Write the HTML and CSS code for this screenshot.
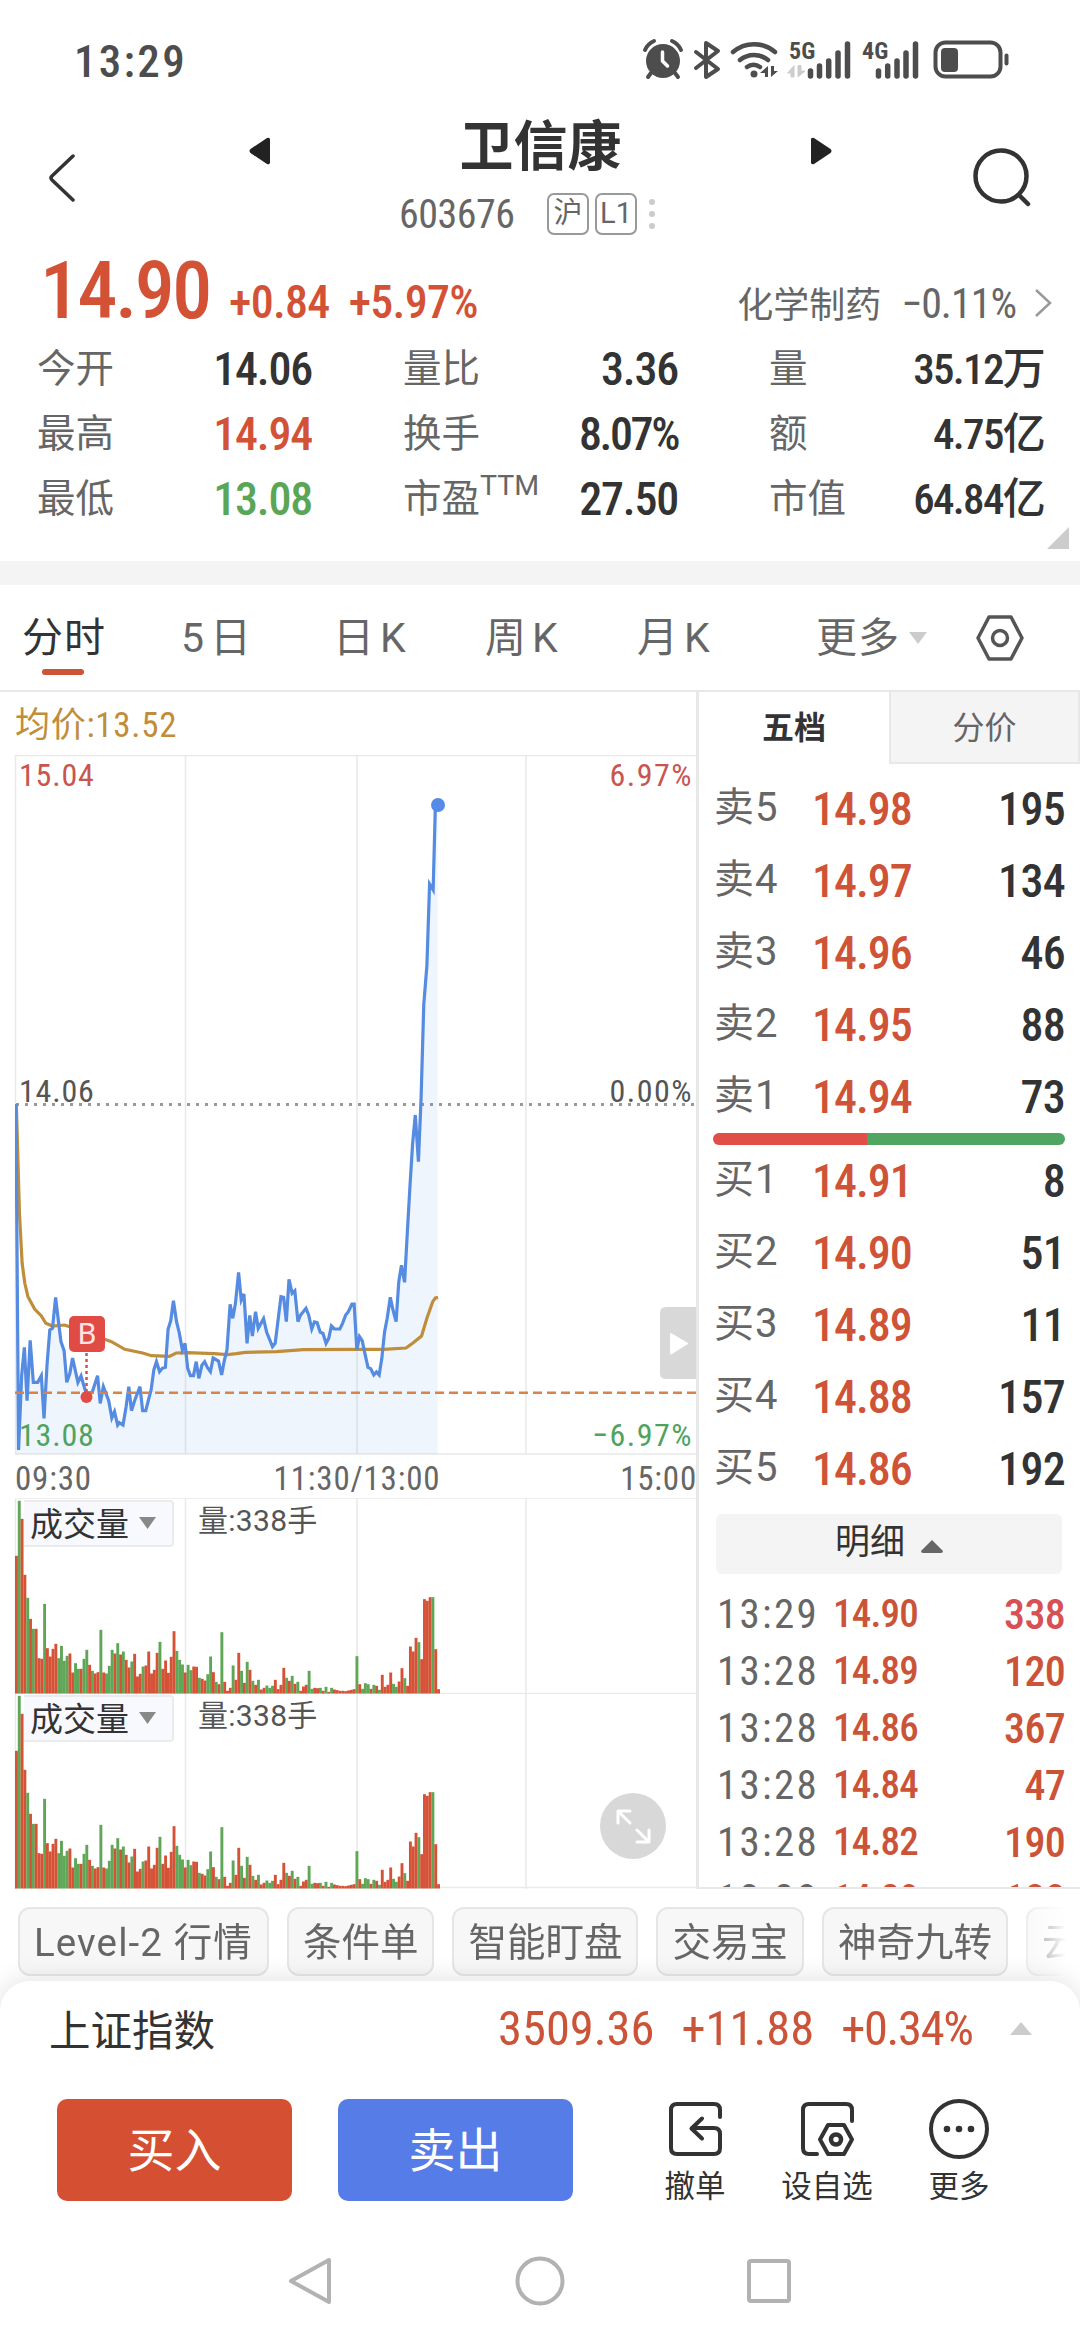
FILE: index.html
```html
<!DOCTYPE html>
<html lang="zh-CN">
<head>
    <meta charset="UTF-8">
    <meta name="viewport" content="width=device-width, initial-scale=1.0">
    <title>卫信康 603676</title>
    <link rel="stylesheet" href="styles.css">
</head>
<body>
    <div class="status-bar">
        <span class="clock">13:29</span>
        <svg class="status-icons" width="380" height="40" viewBox="0 0 380 40" fill="none" stroke-linecap="round">
            <!-- alarm -->
            <circle cx="19" cy="21" r="17" fill="#4d4d4d"/>
            <path d="M1 10a17 17 0 0 1 9-9M28 1a17 17 0 0 1 9 9M7 33l-3 4M31 33l3 4" stroke="#4d4d4d" stroke-width="4"/>
            <path d="M18.500 12v9l5 5" stroke="#fff" stroke-width="3.500"/>
            <!-- bluetooth -->
            <path d="M52 12l22 17-12 8V3l12 8-22 17" stroke="#4d4d4d" stroke-width="4" stroke-linejoin="round"/>
            <!-- wifi -->
            <path d="M89 12a32 32 0 0 1 42 0M96 20a22 22 0 0 1 28 0M103 27a11 11 0 0 1 13 0" stroke="#4d4d4d" stroke-width="4.500"/>
            <circle cx="110" cy="34" r="3.500" fill="#4d4d4d"/>
            <path d="M124 26v11h-3v-4h-5zM127 26v11l7-6h-4v-5z" fill="#4d4d4d"/>
            <!-- signals -->
            <text class="signal-text" x="145" y="19">5G</text>
            <path d="M150 26v11h-3v-4h-3zM154 26v11l7-6h-4v-5z" fill="#ccc" stroke="#ccc"/>
            <path d="M166.500 31v5M175.500 26v10M184.700 21v15M194 13v23M203.500 4v32" stroke="#4d4d4d" stroke-width="5.500"/>
            <text class="signal-text" x="218" y="19">4G</text>
            <path d="M234.500 31v5M243.700 26v10M253 21v15M262 13v23M271.500 4v32" stroke="#4d4d4d" stroke-width="5.500"/>
            <!-- battery -->
            <rect x="291.500" y="2.500" width="65" height="34" rx="10" stroke="#4d4d4d" stroke-width="4"/>
            <rect x="297" y="8" width="17" height="24" rx="4" fill="#4d4d4d"/>
            <path d="M362.500 15.500v8" stroke="#4d4d4d" stroke-width="4"/>
        </svg>
    </div>

    <header class="header">
        <svg class="back" width="28" height="50" viewBox="0 0 28 50" fill="none" stroke="#333" stroke-width="3.500" stroke-linecap="round" stroke-linejoin="round"><path d="M25 3L4 23q-2 2 0 4l21 20"/></svg>
        <svg class="switch prev" width="22" height="28" viewBox="0 0 22 28"><path d="M21 2v24q-1 2-3 1L1.500 16q-2-2 0-4L18 1q2-1 3 1z" fill="#222"/></svg>
        <div class="title">
            <h1>卫信康</h1>
            <div class="code">
                <span class="code-num">603676</span>
                <span class="badge">沪</span>
                <span class="badge">L1</span>
                <span class="dots"><i></i><i></i><i></i></span>
            </div>
        </div>
        <svg class="switch" width="22" height="28" viewBox="0 0 22 28"><path d="M1 2v24q1 2 3 1L20.500 16q2-2 0-4L4 1q-2-1-3 1z" fill="#222"/></svg>
        <svg class="search" width="60" height="62" viewBox="0 0 60 62" fill="none" stroke="#333" stroke-width="4.500" stroke-linecap="round"><circle cx="28" cy="29" r="25.500"/><path d="M46 48l9 9"/></svg>
    </header>

    <section class="quote">
        <div class="price-row">
            <span class="price">14.90</span>
            <span class="change">+0.84</span>
            <span class="change">+5.97%</span>
            <span class="industry">化学制药</span>
            <span class="industry-rate">−0.11%</span>
            <svg class="chevron" width="18" height="30" viewBox="0 0 18 30" fill="none" stroke="#999" stroke-width="2.500"><path d="M2 2l14 13L2 28"/></svg>
        </div>
        <div class="stats">
            <div class="stat"><span>今开</span><b>14.06</b></div>
            <div class="stat"><span>量比</span><b>3.36</b></div>
            <div class="stat"><span>量</span><b>35.12万</b></div>
            <div class="stat"><span>最高</span><b class="up">14.94</b></div>
            <div class="stat"><span>换手</span><b>8.07%</b></div>
            <div class="stat"><span>额</span><b>4.75亿</b></div>
            <div class="stat"><span>最低</span><b class="down">13.08</b></div>
            <div class="stat"><span>市盈<sup>TTM</sup></span><b>27.50</b></div>
            <div class="stat"><span>市值</span><b>64.84亿</b></div>
        </div>
        <svg class="corner" width="22" height="22" viewBox="0 0 22 22"><path d="M22 0v22H0z" fill="#ccc"/></svg>
    </section>

    <nav class="tabs">
        <span class="tab active">分时</span>
        <span class="tab">5日</span>
        <span class="tab">日K</span>
        <span class="tab">周K</span>
        <span class="tab">月K</span>
        <span class="tab more">更多</span>
        <svg width="18" height="12" viewBox="0 0 18 12"><path d="M0 0h18L9 12z" fill="#ccc"/></svg>
        <svg class="gear" width="50" height="48" viewBox="0 0 50 48" fill="none" stroke="#555" stroke-width="3.500" stroke-linejoin="round"><path d="M14 3h22l11 21-11 21H14L3 24z"/><circle cx="25" cy="24" r="7.500"/></svg>
    </nav>

    <main class="main">
        <div class="charts">
            <div class="avg">均价:13.52</div>
            <svg class="minute" width="697" height="744" viewBox="0 755 697 744">
                <path class="grid" d="M15 755.500H696M15.500 755V1454M185.500 755V1454M357 755V1454M526 755V1454M15 1454H696M15 1499H696"/>
                <path d="M16 1104.500H696" stroke="#999" stroke-width="3" stroke-dasharray="3 6"/>
                <svg x="15" y="755" width="681" height="699" viewBox="34 -975 1526 2097" preserveAspectRatio="none">
                    <polygon id="area"/>
                    <polyline class="avg-line" points="37,73 44,400 50,550 56,610 63,650 78,687 93,708 103,730 118,738 145,735 160,742 200,762 235,778 250,785 280,808 320,819 340,827 380,829 395,819 420,818 480,821 510,824 530,821 550,817 620,815 680,809 800,808 860,808 910,804 925,790 945,768 957,715 970,665 976,654 982,652"/>
                    <polyline id="line"/>
                </svg>
                <path d="M15 1392.700H696" stroke="#d9824a" stroke-width="2.500" stroke-dasharray="9 5"/>
                <circle cx="438" cy="805" r="7" fill="#558be8"/>
                <text class="tick red" x="19" y="786">15.04</text>
                <text class="tick red end" x="693" y="786">6.97%</text>
                <text class="tick" x="19" y="1102">14.06</text>
                <text class="tick end" x="693" y="1102">0.00%</text>
                <text class="tick green" x="19" y="1446">13.08</text>
                <text class="tick green end" x="693" y="1446">−6.97%</text>
                <text class="tick time" x="15" y="1490">09:30</text>
                <text class="tick time mid" x="357" y="1490">11:30/13:00</text>
                <text class="tick time last" x="697" y="1490">15:00</text>
                <!-- buy marker -->
                <path d="M86.500 1353v38" stroke="#e04b46" stroke-width="2.500" stroke-dasharray="3 3"/>
                <circle cx="86.500" cy="1397" r="6" fill="#e04b46"/>
                <rect x="69" y="1316" width="36" height="36" rx="5" fill="#e04b46"/>
                <text class="marker" x="87" y="1344">B</text>
                <!-- side panel handle -->
                <path d="M696 1307v72h-30q-6 0-6-6v-60q0-6 6-6z" fill="#d8d8d8"/>
                <path d="M671 1334l16 9.500-16 10z" fill="#fff" stroke="#fff" stroke-width="2" stroke-linejoin="round"/>
            </svg>
            <div class="volume">
                <svg class="bars" width="697" height="195" viewBox="0 0 697 195">
                    <path class="grid" d="M15.500 0V195M185.500 0V195M357 0V195M526 0V195M15 194.500H696"/>
                </svg>
                <span class="vol-name">成交量<svg width="17" height="12" viewBox="0 0 17 12"><path d="M0 0h17L8.500 12z" fill="#888"/></svg></span>
                <span class="vol-value">量:338手</span>
            </div>
            <div class="volume">
                <svg class="bars" width="697" height="195" viewBox="0 0 697 195">
                    <path class="grid" d="M15.500 0V195M185.500 0V195M357 0V195M526 0V195M15 193.500H696"/>
                </svg>
                <span class="vol-name">成交量<svg width="17" height="12" viewBox="0 0 17 12"><path d="M0 0h17L8.500 12z" fill="#888"/></svg></span>
                <span class="vol-value">量:338手</span>
                <svg class="expand" width="66" height="66" viewBox="0 0 66 66" fill="none" stroke="#fff" stroke-width="3" stroke-linecap="round" stroke-linejoin="round"><circle cx="33" cy="33" r="33" fill="#d8d8d8" stroke="none"/><path d="M18 30V18h12M18 18l12 12M37 37l12 12M49 37v12H37"/></svg>
            </div>
        </div>

        <aside class="book">
            <div class="book-tabs"><span class="on">五档</span><span>分价</span></div>
            <div class="levels">
                <div class="level"><span>卖5</span><b>14.98</b><em>195</em></div>
                <div class="level"><span>卖4</span><b>14.97</b><em>134</em></div>
                <div class="level"><span>卖3</span><b>14.96</b><em>46</em></div>
                <div class="level"><span>卖2</span><b>14.95</b><em>88</em></div>
                <div class="level"><span>卖1</span><b>14.94</b><em>73</em></div>
            </div>
            <div class="ratio"></div>
            <div class="levels">
                <div class="level"><span>买1</span><b>14.91</b><em>8</em></div>
                <div class="level"><span>买2</span><b>14.90</b><em>51</em></div>
                <div class="level"><span>买3</span><b>14.89</b><em>11</em></div>
                <div class="level"><span>买4</span><b>14.88</b><em>157</em></div>
                <div class="level"><span>买5</span><b>14.86</b><em>192</em></div>
            </div>
            <div class="detail-head">明细<svg width="22" height="13" viewBox="0 0 22 13"><path d="M11 0l11 11q0 2-2 2H2q-2 0-2-2z" fill="#666"/></svg></div>
            <div class="trades">
                <div class="trade"><span>13:29</span><b>14.90</b><em class="big">338</em></div>
                <div class="trade"><span>13:28</span><b>14.89</b><em>120</em></div>
                <div class="trade"><span>13:28</span><b>14.86</b><em>367</em></div>
                <div class="trade"><span>13:28</span><b>14.84</b><em>47</em></div>
                <div class="trade"><span>13:28</span><b>14.82</b><em>190</em></div>
                <div class="trade"><span>13:28</span><b>14.80</b><em>180</em></div>
            </div>
        </aside>
    </main>

    <div class="chips">
        <span class="level2">Level-2 行情</span>
        <span>条件单</span>
        <span>智能盯盘</span>
        <span>交易宝</span>
        <span>神奇九转</span>
        <span>云参数</span>
    </div>

    <footer class="sheet">
        <div class="index">
            <span class="index-name">上证指数</span>
            <b>3509.36</b>
            <b>+11.88</b>
            <b class="pct">+0.34%</b>
            <svg width="22" height="13" viewBox="0 0 22 13"><path d="M11 0l11 13H0z" fill="#ccc"/></svg>
        </div>
        <div class="actions">
            <button class="trade-btn buy">买入</button>
            <button class="trade-btn sell">卖出</button>
            <div class="action">
                <svg width="60" height="60" viewBox="0 0 60 60" fill="none" stroke="#333" stroke-width="4" stroke-linecap="round" stroke-linejoin="round"><path d="M55 18v-7q0-6-6-6H12q-6 0-6 6v38q0 6 6 6h37q6 0 6-6V35q0-6-6-6H28M37 19.500L26.500 29.500 37 39.500"/></svg>
                <span>撤单</span>
            </div>
            <div class="action">
                <svg width="60" height="60" viewBox="0 0 60 60" fill="none" stroke="#333" stroke-width="4" stroke-linecap="round" stroke-linejoin="round"><path d="M55 22v-11q0-6-6-6H12q-6 0-6 6v38q0 6 6 6h8"/><path d="M31 26h16l8 14.500L47 55H31l-8-14.500z"/><circle cx="39" cy="40.500" r="5" stroke-width="4.500"/></svg>
                <span>设自选</span>
            </div>
            <div class="action">
                <svg width="60" height="60" viewBox="0 0 60 60" fill="none" stroke="#333" stroke-width="4"><circle cx="30" cy="30" r="28"/><g fill="#333" stroke="none"><circle cx="18" cy="30" r="3.300"/><circle cx="30" cy="30" r="3.300"/><circle cx="42" cy="30" r="3.300"/></g></svg>
                <span>更多</span>
            </div>
        </div>
        <div class="sysnav">
            <svg width="50" height="50" viewBox="0 0 50 50"><path d="M43 4v42L5 25z"/></svg>
            <svg width="50" height="50" viewBox="0 0 50 50"><circle cx="25" cy="25" r="22.500"/></svg>
            <svg width="50" height="50" viewBox="0 0 50 50"><rect x="5" y="5" width="40" height="40" rx="2"/></svg>
        </div>
    </footer>

    <script src="script.js"></script>
</body>
</html>
```
FILE: styles.css
```css
* {
    margin: 0;
    padding: 0;
    box-sizing: border-box;
}

body {
    width: 1080px;
    height: 2340px;
    overflow: hidden;
    background: #fff;
    color: #333;
    font-family: Roboto, "Noto Sans CJK SC", sans-serif;
}

svg {
    display: block;
    flex: none;
}

b, em {
    font-style: normal;
    font-weight: 500;
}

.clock, .code-num, .price, .change, .industry-rate, .stat b, .avg, .tick, .level b, .level em, .trade, .index b, .signal-text {
    font-family: "Roboto Condensed", "Noto Sans CJK SC", sans-serif;
}

/* status bar */
.status-bar {
    height: 112px;
    padding: 10px 56px 0 74px;
    display: flex;
    align-items: center;
    justify-content: space-between;
}

.clock {
    font-size: 45px;
    font-weight: 500;
    letter-spacing: 2.3px;
    color: #4d4d4d;
}

.status-icons {
    margin-top: -3px;
    overflow: visible;
}

.signal-text {
    font-size: 24px;
    font-weight: 700;
    fill: #4d4d4d;
}

/* header */
.header {
    height: 133px;
    display: flex;
    align-items: center;
    padding-left: 48px;
}

.back {
    margin-top: -1px;
}

.switch {
    align-self: flex-start;
    margin-top: 25px;
}

.switch.prev {
    margin-left: 173px;
}

.title {
    width: 539px;
    height: 133px;
}

.title h1 {
    font-size: 54px;
    font-weight: 700;
    line-height: 71px;
    text-align: center;
}

.code {
    height: 62px;
    display: flex;
    align-items: center;
    padding-left: 128px;
}

.code-num {
    width: 148px;
    font-size: 40px;
    letter-spacing: -0.5px;
    color: #666;
}

.badge {
    width: 42px;
    height: 42px;
    margin-right: 6px;
    border: 2px solid #999;
    border-radius: 7px;
    font-size: 29px;
    line-height: 37px;
    text-align: center;
    color: #666;
}

.dots {
    margin-left: 6px;
}

.dots i {
    display: block;
    width: 6px;
    height: 6px;
    margin: 6px 0;
    border-radius: 50%;
    background: #ccc;
}

.search {
    margin: -1px 0 0 141px;
}

/* quote */
.quote {
    position: relative;
    height: 340px;
    border-bottom: 24px solid #f4f4f4;
}

.price-row {
    height: 91px;
    padding-left: 40px;
    display: flex;
    align-items: baseline;
    color: #d35235;
}

.price {
    width: 189px;
    font-size: 80px;
    font-weight: 500;
    line-height: 92px;
    letter-spacing: -2.5px;
}

.change {
    margin-right: 19px;
    font-size: 46px;
    font-weight: 500;
    letter-spacing: -0.7px;
}

.industry {
    margin-left: auto;
    margin-right: 20px;
    font-size: 36px;
    color: #666;
}

.industry-rate {
    font-size: 42px;
    letter-spacing: -1px;
    color: #666;
}

.chevron {
    margin: 0 28px 0 18px;
}

.stats {
    display: grid;
    grid-template-columns: repeat(3, 366px);
    grid-auto-rows: 65px;
    padding-left: 37px;
}

.stat {
    display: flex;
    align-items: center;
    justify-content: space-between;
    padding-right: 91px;
    white-space: nowrap;
}

.stat span {
    font-size: 38.5px;
    line-height: 60px;
    color: #666;
}

.stat sup {
    font-size: 28.5px;
    line-height: 0;
    vertical-align: 17px;
}

.stat b {
    font-size: 46px;
    line-height: 60px;
    letter-spacing: -1.2px;
}

.stat:nth-child(3n) b {
    font-size: 43px;
    letter-spacing: -1.7px;
}

.stat:nth-child(5) b {
    letter-spacing: -2.4px;
}

.stat .up {
    color: #d35235;
}

.stat .down {
    color: #5aa556;
}

.corner {
    position: absolute;
    right: 11px;
    bottom: 12px;
}

/* period tabs */
.tabs {
    height: 107px;
    padding-left: 22px;
    display: flex;
    align-items: center;
    border-bottom: 2px solid #e8e8e8;
}

.tab {
    width: 152px;
    font-size: 41px;
    line-height: 50px;
    letter-spacing: 6px;
    color: #666;
}

.tab:nth-child(2) {
    margin-left: 7px;
}

.tab.active {
    letter-spacing: 1px;
    color: #333;
}

.tab.active::after {
    content: "";
    display: block;
    width: 42px;
    height: 6px;
    margin: 6px 0 -12px 20px;
    border-radius: 3px;
    background: #cc5336;
}

.tab.more {
    width: 93px;
    margin-left: 27px;
    letter-spacing: 1px;
}

.gear {
    margin-left: 48px;
}

/* charts */
.main {
    display: flex;
    height: 1197px;
}

.charts {
    width: 699px;
    border-right: 3px solid #e8e8e8;
}

.avg {
    height: 63px;
    padding-left: 15px;
    font-size: 35px;
    line-height: 67px;
    letter-spacing: 0.7px;
    color: #c08e3a;
}

.grid {
    fill: none;
    stroke: #e9e9e9;
    stroke-width: 1.5;
}

#area {
    fill: #4f8be6;
    fill-opacity: 0.09;
}

#line, .avg-line {
    fill: none;
    stroke: #558be0;
    stroke-width: 3.2;
    vector-effect: non-scaling-stroke;
}

.avg-line {
    stroke: #c08e3a;
}

.tick {
    font-size: 32px;
    letter-spacing: 0.8px;
    fill: #555;
}

.tick.red {
    fill: #c8564f;
}

.tick.green {
    fill: #4fa35f;
}

.tick.end {
    text-anchor: end;
    letter-spacing: 1.5px;
}

.tick.last {
    text-anchor: end;
}

.tick.mid {
    text-anchor: middle;
}

.tick.time {
    font-size: 33px;
    fill: #666;
}

.marker {
    font-size: 30px;
    text-anchor: middle;
    fill: #ffe3e0;
}

.volume {
    position: relative;
    height: 195px;
}

.vol-name {
    position: absolute;
    left: 24px;
    top: 1px;
    width: 150px;
    height: 47px;
    padding: 2px 0 0 6px;
    display: flex;
    align-items: center;
    gap: 10px;
    border: 2px solid #ebebeb;
    border-left: 0;
    border-radius: 0 4px 4px 0;
    background: #f8f9ff;
    font-size: 33px;
    line-height: 43px;
}

.vol-name svg {
    margin-top: -3px;
}

.vol-value {
    position: absolute;
    left: 198px;
    top: 0;
    font-size: 30px;
    line-height: 43px;
    letter-spacing: 0.3px;
    color: #555;
}

.expand {
    position: absolute;
    left: 600px;
    top: 99px;
}

/* order book */
.book {
    width: 381px;
    position: relative;
}

.book-tabs {
    display: flex;
    height: 72px;
    font-size: 32px;
    line-height: 73px;
    text-align: center;
}

.book-tabs span {
    width: 191px;
    color: #666;
    background: #f4f4f4;
    border: 2px solid #e8e8e8;
    border-top: 0;
}

.book-tabs .on {
    width: 190px;
    border: 0;
    background: none;
    font-weight: 700;
    color: #333;
}

.levels {
    padding: 0 15px 0 15px;
}

.book-tabs + .levels {
    padding-top: 9px;
}

.level {
    height: 72px;
    display: flex;
    align-items: center;
    font-size: 46px;
    line-height: 74px;
}

.level span {
    width: 98px;
    font-size: 40px;
    line-height: 66px;
    margin-top: -3px;
    letter-spacing: 1px;
    color: #666;
}

.level b {
    letter-spacing: -1px;
    color: #cf5336;
}

.level em, .trade em {
    margin-left: auto;
    letter-spacing: -0.7px;
}

.ratio {
    height: 12px;
    margin: 0 15px 0 14px;
    border-radius: 6px;
    background: linear-gradient(to right, #e04e47 154px, #4fa561 154px);
}

.detail-head {
    height: 60px;
    margin: 9px 18px 12px 17px;
    border-radius: 6px;
    background: #f4f4f4;
    display: flex;
    align-items: center;
    justify-content: center;
    gap: 16px;
    font-size: 35px;
    line-height: 56px;
    padding-bottom: 2px;
}

.detail-head svg {
    margin-top: 7px;
}

.trades {
    height: 303px;
    overflow: hidden;
    border-bottom: 2px solid #e8e8e8;
    padding: 0 15px 0 18px;
}

.trade {
    height: 57px;
    display: flex;
    align-items: center;
    font-size: 42px;
    line-height: 57px;
    color: #cb5438;
}

.trade span {
    width: 116px;
    font-size: 41px;
    letter-spacing: 2.3px;
    color: #666;
}

.trade b {
    font-size: 39px;
    letter-spacing: -0.8px;
}

.trade .big {
    color: #d65055;
}

/* chips */
.chips {
    height: 92px;
    padding: 18px 0 0 18px;
    display: flex;
    align-items: flex-start;
    gap: 18px;
    overflow: hidden;
    -webkit-mask-image: linear-gradient(to right, #000 1010px, transparent 1066px);
    mask-image: linear-gradient(to right, #000 1010px, transparent 1066px);
}

.chips span {
    flex: none;
    height: 69px;
    padding: 0 14px;
    border: 2px solid #e6e6e6;
    border-radius: 12px;
    background: #f7f7f7;
    font-size: 38.5px;
    line-height: 67px;
    color: #666;
}

.chips .level2 {
    letter-spacing: 1.1px;
}

/* bottom sheet */
.sheet {
    position: relative;
    height: 359px;
    border-radius: 30px 30px 0 0;
    background: #fff;
    box-shadow: 0 0 28px rgba(0, 0, 0, 0.13);
}

.index {
    height: 95px;
    padding: 0 48px 0 49px;
    display: flex;
    align-items: center;
    color: #cb5438;
}

.index-name {
    width: 449px;
    margin-top: -2px;
    font-size: 41.5px;
    color: #333;
}

.index b {
    margin: -1px 27px 0 0;
    font-size: 48.5px;
    font-weight: 450;
}

.index .pct {
    margin-right: 0;
    letter-spacing: -1.3px;
}

.index svg {
    margin-left: auto;
}

.actions {
    display: flex;
    align-items: flex-start;
    padding: 23px 0 0 57px;
}

.trade-btn {
    width: 235px;
    height: 102px;
    margin-right: 46px;
    border: 0;
    border-radius: 10px;
    background: #d55033;
    color: #fff;
    font: 47px/103px Roboto, "Noto Sans CJK SC", sans-serif;
}

.trade-btn.sell {
    background: #567ce8;
}

.action {
    width: 132px;
    display: flex;
    flex-direction: column;
    align-items: center;
    font-size: 30.5px;
    line-height: 40px;
}

.action:nth-child(3) {
    margin-left: 10px;
}

.action span {
    margin-top: 8px;
}

.sysnav {
    display: flex;
    justify-content: center;
    gap: 179px;
    padding-top: 49px;
    fill: none;
    stroke: #b2b2b2;
    stroke-width: 4;
    stroke-linejoin: round;
}
```
FILE: script.js
```js
const SVG_NS = 'http://www.w3.org/2000/svg';

const price = '36,73 42,1110 49,885 55,802 61,962 68,781 75,907 85,907 93,887 99,1015 106,850 112,750 118,745 125,652 131,720 137,785 144,812 150,907 157,880 163,834 175,907 182,888 190,925 194,940 207,937 219,887 225,970 232,920 244,962 251,1014 257,995 264,1035 268,1028 276,1035 283,980 289,920 295,992 302,962 314,920 320,992 327,992 333,960 339,930 345,870 351,845 358,875 364,865 371,862 377,748 383,722 389,662 396,725 402,758 409,810 415,790 421,865 427,887 434,887 440,845 446,895 453,855 459,845 465,862 472,875 478,834 490,843 497,885 503,842 509,810 516,673 522,715 528,670 535,577 541,660 547,642 554,790 560,706 566,768 573,695 579,745 591,716 598,757 611,800 617,790 630,650 636,652 642,725 648,598 655,640 661,632 668,725 674,705 686,685 692,705 699,747 705,726 711,728 718,757 724,760 731,790 737,775 743,738 750,747 762,747 768,730 775,705 781,695 789,672 794,672 800,810 806,770 812,782 818,820 825,862 831,866 838,885 844,876 850,885 856,835 862,757 868,715 875,652 881,690 888,725 894,605 900,556 907,607 913,460 919,320 925,190 931,105 938,245 944,52 950,-227 957,-344 963,-588 971,-570 976,-825 981,-825';

document.getElementById('line').setAttribute('points', price);
document.getElementById('area').setAttribute('points', price + ' 981,1122 36,1122');

// r = up minute, g = down minute
const volume = 'r413 g578 r524 r356 g287 r224 g194 r194 r106 r104 g269 r136 r111 r134 r149 g106 g143 g98 g113 r120 r63 g91 g74 r74 g104 g131 r86 g68 r60 r64 g191 r63 g60 g83 g131 r120 g151 r117 g126 r101 r78 g96 r119 r51 r59 g81 r84 r126 r60 r71 r122 g155 r74 r99 r62 r110 r187 g128 g101 g87 r63 g86 g70 r81 r80 g47 r44 r39 g58 g111 r64 g35 r28 g184 r35 r8 r17 g84 r41 r122 g68 r32 g95 r71 g38 r26 g41 r12 r17 g24 g17 g23 r41 r13 r26 r77 g47 r38 g53 r29 g35 r8 r21 r26 g68 g14 r17 r16 g17 r8 g20 r5 g17 r12 r10 r8 r8 r7 r9 r11 r13 g112 r28 g14 g31 g28 r14 g26 r23 g11 r56 r20 r26 r63 g29 g20 r36 r76 g46 r23 r141 r126 r167 g154 r103 r283 r278 r289 g289 r133 r13'.split(' ');

document.querySelectorAll('.bars').forEach(svg => {
    volume.forEach((item, i) => {
        const h = Number(item.slice(1)) / 3;
        const bar = document.createElementNS(SVG_NS, 'rect');
        bar.setAttribute('x', (15 + i * 2.814).toFixed(2));
        bar.setAttribute('y', (194.5 - h).toFixed(2));
        bar.setAttribute('width', 2.9);
        bar.setAttribute('height', h.toFixed(2));
        bar.setAttribute('fill', item[0] === 'r' ? '#d55236' : '#5fa657');
        svg.appendChild(bar);
    });
});
```
